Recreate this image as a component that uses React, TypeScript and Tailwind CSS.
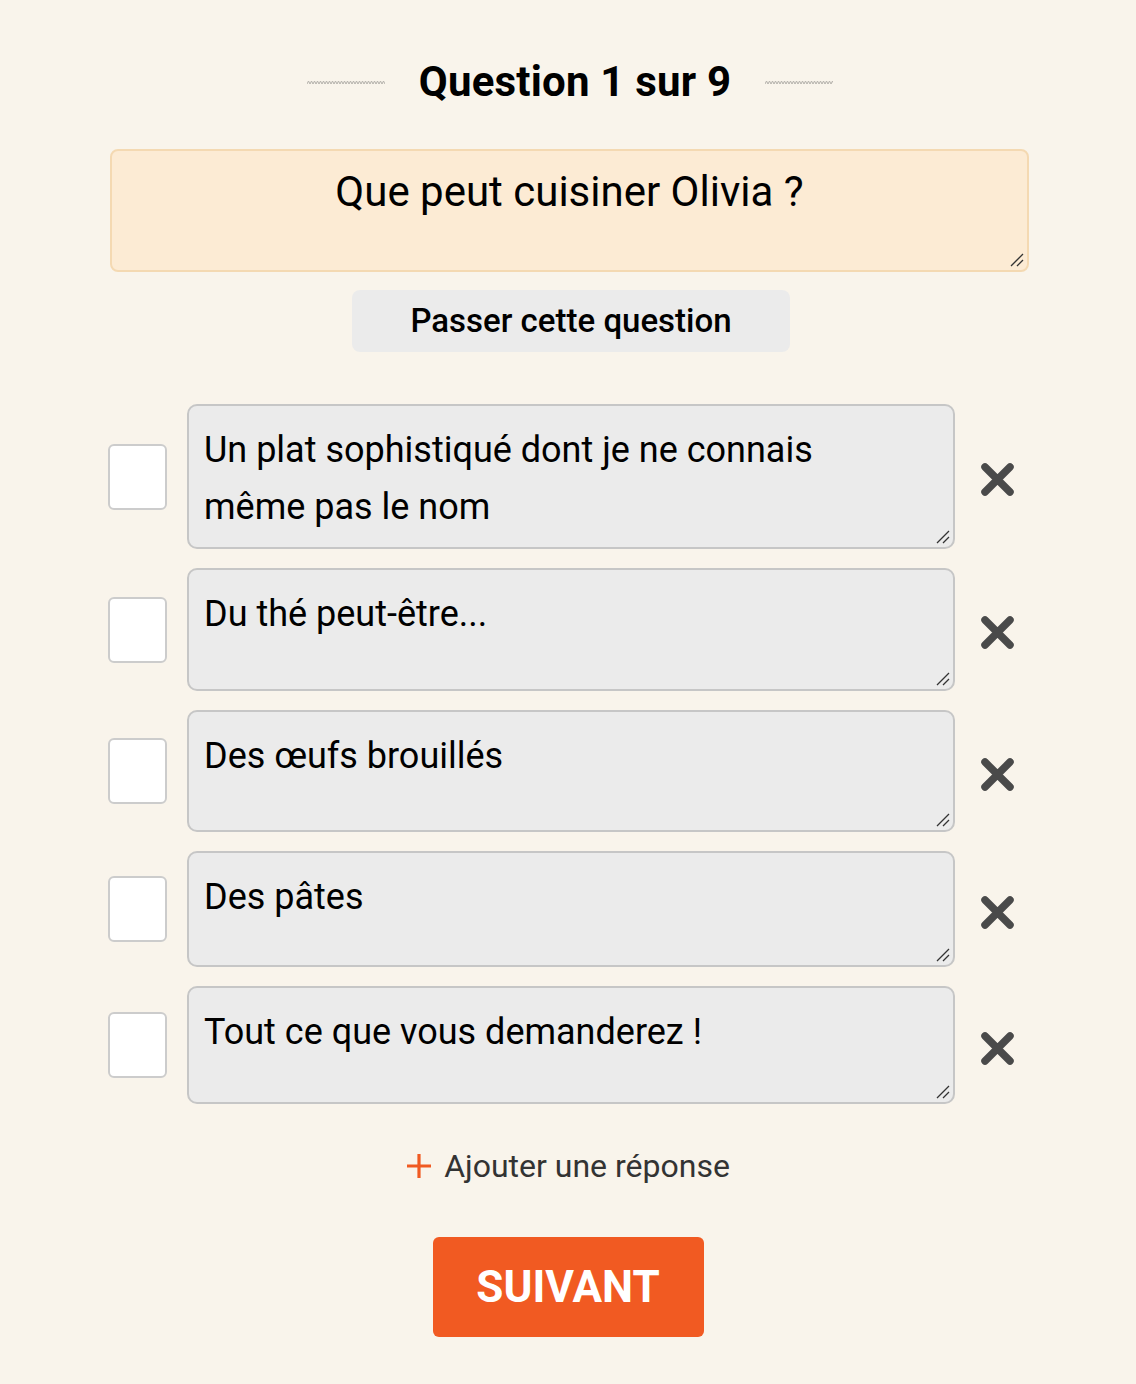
import React from 'react'

const ANSWERS: { text: string; h: string }[] = [
  { text: 'Un plat sophistiqué dont je ne connais même pas le nom', h: 'h-[145px]' },
  { text: 'Du thé peut-être...', h: 'h-[123px]' },
  { text: 'Des œufs brouillés', h: 'h-[122px]' },
  { text: 'Des pâtes', h: 'h-[116px]' },
  { text: 'Tout ce que vous demanderez !', h: 'h-[118px]' },
]

function Wave({ w }: { w: number }) {
  let d = 'M0 4'
  for (let x = 0; x < w; x += 3) d += ` L${x + 1.5} 1 L${x + 3} 4`
  return (
    <svg width={w} height="5" viewBox={`0 0 ${w} 5`} className="shrink-0">
      <path d={d} fill="none" stroke="#b4b1ab" strokeWidth="1" />
    </svg>
  )
}

function Cross() {
  return (
    <svg width="35" height="35" viewBox="0 0 35 35" className="shrink-0">
      <path d="M5 5 L30 30 M30 5 L5 30" stroke="#4a4a4a" strokeWidth="7.5" strokeLinecap="round" />
    </svg>
  )
}

function Grip() {
  return (
    <svg width="16" height="16" viewBox="0 0 16 16" className="pointer-events-none absolute bottom-[4px] right-[4px]">
      <path d="M2 14 L14 2 M8 14 L14 8" stroke="#333333" strokeWidth="1.3" />
    </svg>
  )
}

export default function App() {
  return (
    <div
      className="min-h-[1384px] w-full bg-[#f9f4eb] text-black"
      style={{ fontFamily: 'Roboto, "Noto Sans", sans-serif' }}
    >
      <div className="flex flex-col items-center pt-[52px]">
        {/* header */}
        <div className="flex items-center pl-[4px]">
          <Wave w={78} />
          <h1 className="mx-[34px] text-[42px] font-bold leading-[60px] tracking-[0.2px]">Question 1 sur 9</h1>
          <Wave w={68} />
        </div>

        {/* question */}
        <div className="relative mt-[37px] ml-[3px]">
          <textarea
            readOnly
            defaultValue="Que peut cuisiner Olivia ?"
            className="block h-[123px] w-[919px] resize-none rounded-[8px] border-2 border-[#f4d9b2] bg-[#fcebd4] px-4 pt-[12px] text-center text-[42px] leading-[58px] text-black outline-none"
          />
          <Grip />
        </div>

        <button className="mt-[18px] ml-[6px] h-[62px] w-[438px] rounded-[8px] bg-[#ebebeb] text-[33px] font-medium text-black">
          Passer cette question
        </button>

        {/* answers */}
        <div className="mt-[52px] flex w-[920px] flex-col gap-[19px]">
          {ANSWERS.map((a) => (
            <div key={a.text} className="flex items-center">
              <div className="h-[66px] w-[59px] shrink-0 rounded-[6px] border-2 border-[#cccccc] bg-white" />
              <div className="relative ml-[20px] shrink-0">
                <textarea
                  readOnly
                  defaultValue={a.text}
                  className={`block w-[768px] ${a.h} resize-none rounded-[10px] border-2 border-[#c6c6c6] bg-[#ebebeb] pl-[15px] pr-[110px] pt-[16px] text-[36px] leading-[57px] text-black outline-none`}
                />
                <Grip />
              </div>
              <div className="ml-[25px] flex items-center pt-[6px]">
                <Cross />
              </div>
            </div>
          ))}
        </div>

        {/* add answer */}
        <button className="mt-[42px] flex items-center gap-[12px] text-[32px] text-[#333333]">
          <svg width="26" height="26" viewBox="0 0 26 26">
            <path d="M13 1 V25 M1 13 H25" stroke="#f05a22" strokeWidth="3.2" />
          </svg>
          <span className="leading-[40px]">Ajouter une réponse</span>
        </button>

        <button className="mt-[51px] h-[100px] w-[271px] rounded-[6px] bg-[#f15a22] text-[44px] font-bold text-white">
          SUIVANT
        </button>
      </div>
    </div>
  )
}
